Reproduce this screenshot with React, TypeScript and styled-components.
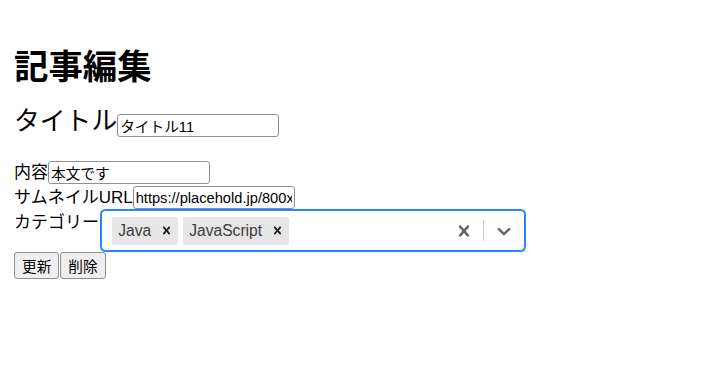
import React from 'react'
import styled, { createGlobalStyle } from 'styled-components'

const fonts = `"Liberation Sans", "Noto Sans CJK JP", sans-serif`

const GlobalStyle = createGlobalStyle`
  body {
    margin: 0;
    background: #ffffff;
    font-family: ${fonts};
    color: #000000;
  }
`

const Page = styled.div`
  padding: 46px 14px 0 14px;
`

const Title = styled.h1`
  margin: 0;
  font-size: 34.4px;
  line-height: 42px;
  font-weight: 700;
`

const Form = styled.form`
  display: flex;
  flex-direction: column;
  margin-top: 16px;
`

const Row = styled.div<{ $big?: boolean; $top?: boolean }>`
  display: flex;
  align-items: ${({ $big, $top }) => ($top || $big ? 'flex-start' : 'center')};
  height: ${({ $big, $top }) => ($top ? '41px' : $big ? '34px' : '25px')};
  margin-bottom: ${({ $big }) => ($big ? '22px' : '0')};
`

const Label = styled.label<{ $big?: boolean }>`
  font-size: ${({ $big }) => ($big ? '25.8px' : '17px')};
  line-height: ${({ $big }) => ($big ? '34px' : '25px')};
  white-space: nowrap;
`

const TextInput = styled.input<{ $drop?: number }>`
  box-sizing: border-box;
  width: 162px;
  height: 23px;
  padding: 1px 2px;
  margin: ${({ $drop }) => `${$drop ?? 0}px 0 0 0`};
  border: 1px solid #8f8f8f;
  border-radius: 3px;
  font-family: ${fonts};
  font-size: 14.67px;
  color: #000000;
  background: #ffffff;
  outline: none;
`

const Buttons = styled.div`
  display: flex;
  gap: 1px;
  margin-top: 1px;
`

const Button = styled.button`
  box-sizing: border-box;
  height: 27px;
  padding: 0 7px;
  margin: 0;
  border: 1px solid #8f8f8f;
  border-radius: 3px;
  background: #efefef;
  font-family: ${fonts};
  font-size: 14.67px;
  color: #000000;
`

/* react-select lookalike */
const Control = styled.div`
  box-sizing: border-box;
  width: 424px;
  height: 41px;
  margin-left: 2px;
  display: flex;
  align-items: center;
  border: 1px solid #2684ff;
  box-shadow: 0 0 0 1px #2684ff;
  border-radius: 4.4px;
  background: #ffffff;
`

const ValueArea = styled.div`
  flex: 1;
  display: flex;
  align-items: center;
  padding: 0 7.5px;
`

const Chip = styled.div`
  display: flex;
  height: 28px;
  margin: 0 2.2px;
  border-radius: 2px;
  background: #e6e6e6;
`

const ChipLabel = styled.span`
  padding: 0 3.3px 0 6.6px;
  font-size: 15.6px;
  line-height: 28px;
  color: #3d3d3d;
`

const ChipRemove = styled.span`
  display: flex;
  align-items: center;
  padding: 0 4.4px;
  color: #1a1a1a;
`

const Indicators = styled.div`
  display: flex;
  align-items: stretch;
  align-self: stretch;
`

const Indicator = styled.div`
  display: flex;
  align-items: center;
  padding: 0 8.8px;
  color: #666666;
`

const Separator = styled.span`
  width: 1px;
  margin: 9px 0;
  background: #cccccc;
`

const Cross = ({ size }: { size: number }) => (
  <svg width={size} height={size} viewBox="0 0 20 20" fill="currentColor">
    <path d="M14.348 14.849c-0.469 0.469-1.229 0.469-1.697 0l-2.651-3.030-2.651 3.029c-0.469 0.469-1.229 0.469-1.697 0-0.469-0.469-0.469-1.229 0-1.697l2.758-3.15-2.759-3.152c-0.469-0.469-0.469-1.228 0-1.697s1.228-0.469 1.697 0l2.652 3.031 2.651-3.031c0.469-0.469 1.228-0.469 1.697 0s0.469 1.229 0 1.697l-2.758 3.152 2.758 3.15c0.469 0.469 0.469 1.229 0 1.698z" />
  </svg>
)

const Chevron = () => (
  <svg width={22} height={22} viewBox="0 0 20 20" fill="currentColor">
    <path d="M4.516 7.548c0.436-0.446 1.043-0.481 1.576 0l3.908 3.747 3.908-3.747c0.533-0.481 1.141-0.446 1.574 0 0.436 0.445 0.408 1.197 0 1.615-0.406 0.418-4.695 4.502-4.695 4.502-0.217 0.223-0.502 0.335-0.787 0.335s-0.57-0.112-0.789-0.335c0 0-4.287-4.084-4.695-4.502s-0.436-1.17 0-1.615z" />
  </svg>
)

type SelectProps = {
  values: string[]
}

const CategorySelect = ({ values }: SelectProps): JSX.Element => (
  <Control>
    <ValueArea>
      {values.map((v) => (
        <Chip key={v}>
          <ChipLabel>{v}</ChipLabel>
          <ChipRemove>
            <Cross size={15} />
          </ChipRemove>
        </Chip>
      ))}
    </ValueArea>
    <Indicators>
      <Indicator>
        <Cross size={22} />
      </Indicator>
      <Separator />
      <Indicator>
        <Chevron />
      </Indicator>
    </Indicators>
  </Control>
)

export default function App(): JSX.Element {
  return (
    <Page>
      <GlobalStyle />
      <Title>記事編集</Title>
      <Form onSubmit={(e) => e.preventDefault()}>
        <Row $big>
          <Label $big>タイトル</Label>
          <TextInput $drop={10} defaultValue="タイトル11" />
        </Row>
        <Row>
          <Label>内容</Label>
          <TextInput defaultValue="本文です" />
        </Row>
        <Row>
          <Label>サムネイルURL</Label>
          <TextInput defaultValue="https://placehold.jp/800x400.png" />
        </Row>
        <Row $top>
          <Label>カテゴリー</Label>
          <CategorySelect values={['Java', 'JavaScript']} />
        </Row>
        <Buttons>
          <Button type="submit">更新</Button>
          <Button type="button">削除</Button>
        </Buttons>
      </Form>
    </Page>
  )
}
